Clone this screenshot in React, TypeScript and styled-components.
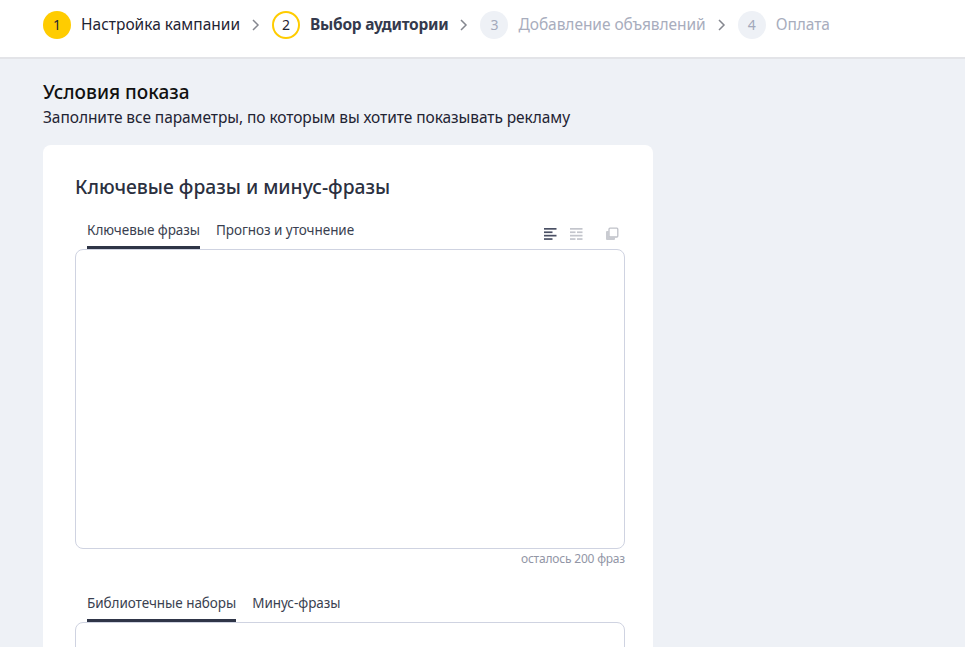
import React from "react";
import styled, { createGlobalStyle } from "styled-components";

const Global = createGlobalStyle`
  html, body { margin: 0; height: 100%; overflow: hidden; background: #eef1f6; }
  #root { height: 100%; }
  * { box-sizing: border-box; }
  body { font-family: "Noto Sans", "Open Sans", "Liberation Sans", sans-serif; color: #1f2433; }
`;

const Page = styled.div`
  height: 647px;
  overflow: hidden;
  display: flex;
  flex-direction: column;
`;

const Header = styled.header`
  flex: none;
  height: 59px;
  padding: 11px 0 0 43px;
  background: #fff;
  border-bottom: 2px solid #e3e4e8;
  display: flex;
  align-items: flex-start;
`;

const Step = styled.div`
  display: flex;
  align-items: center;
  height: 28px;
`;

const Badge = styled.span<{ $state: "done" | "active" | "todo" }>`
  width: 28px;
  height: 28px;
  border-radius: 50%;
  display: flex;
  align-items: center;
  justify-content: center;
  font-size: 14px;
  padding-bottom: 2px;
  background: ${(p) => (p.$state === "done" ? "#fc0" : p.$state === "todo" ? "#eef1f6" : "#fff")};
  border: ${(p) => (p.$state === "active" ? "2px solid #fc0" : "none")};
  color: ${(p) => (p.$state === "todo" ? "#a3a9bb" : "#1f2433")};
`;

const StepLabel = styled.span<{ $state: "done" | "active" | "todo" }>`
  margin-left: 10px;
  padding-bottom: 2px;
  font-size: 15.5px;
  letter-spacing: ${(p) => (p.$state === "active" ? "-0.25px" : p.$state === "todo" ? "-0.05px" : "0")};
  font-weight: ${(p) => (p.$state === "active" ? 700 : 400)};
  color: ${(p) => (p.$state === "todo" ? "#a8adbd" : p.$state === "active" ? "#343a4d" : "#1f2433")};
`;

const Chevron = styled.svg`
  width: 10px;
  height: 12px;
  margin: 0 11px 0 11px;
  fill: none;
  stroke: #85878f;
  stroke-width: 1.5;
`;

const Main = styled.main`
  padding: 21px 0 0 43px;
`;

const Title = styled.h1`
  margin: 0 0 1px;
  font-size: 19px;
  line-height: 24px;
  font-weight: 500;
  color: #111;
`;

const Subtitle = styled.p`
  margin: 0 0 16px;
  font-size: 15.5px;
  line-height: 24px;
  letter-spacing: -0.07px;
  color: #1f2433;
`;

const Card = styled.section`
  width: 610px;
  height: 560px;
  padding: 28px 28px 0 32px;
  background: #fff;
  border-radius: 8px 8px 0 0;
`;

const CardTitle = styled.h2`
  margin: 0 0 16px;
  font-size: 19.25px;
  line-height: 28px;
  font-weight: 500;
  color: #2b3040;
`;

const TabRow = styled.div`
  display: flex;
  align-items: flex-start;
  justify-content: space-between;
  height: 32px;
  padding: 0 0 0 12px;
`;

const Tabs = styled.div`
  display: flex;
  gap: 16px;
`;

const Tab = styled.div<{ $active?: boolean }>`
  height: 32px;
  line-height: 27px;
  font-size: 13.5px;
  letter-spacing: -0.05px;
  color: #3a3f50;
  border-bottom: 3px solid ${(p) => (p.$active ? "#2f3547" : "transparent")};
  margin-bottom: -1px;
`;

const Tools = styled.div`
  display: flex;
  align-items: center;
  height: 32px;
  padding: 1px 6px 0 0;
  gap: 12px;
`;

const ToolIcon = styled.svg<{ $gap?: boolean }>`
  width: 14px;
  height: 14px;
  display: block;
  margin-left: ${(p) => (p.$gap ? "10px" : "0")};
`;

const Field = styled.div<{ $height: number }>`
  position: relative;
  height: ${(p) => p.$height}px;
  border: 1px solid #cfd3e1;
  border-radius: 8px;
  background: #fff;
`;

const Counter = styled.div`
  text-align: right;
  font-size: 12px;
  line-height: 20px;
  letter-spacing: -0.2px;
  color: #9296a6;
  margin-bottom: 21px;
`;

const steps = [
  { n: 1, label: "Настройка кампании", state: "done" as const },
  { n: 2, label: "Выбор аудитории", state: "active" as const },
  { n: 3, label: "Добавление объявлений", state: "todo" as const },
  { n: 4, label: "Оплата", state: "todo" as const },
];

export default function App() {
  return (
    <Page>
      <Global />
      <Header>
        {steps.map((s, i) => (
          <React.Fragment key={s.n}>
            <Step>
              <Badge $state={s.state}>{s.n}</Badge>
              <StepLabel $state={s.state}>{s.label}</StepLabel>
            </Step>
            {i < steps.length - 1 && (
              <Step>
                <Chevron viewBox="0 0 10 12">
                  <path d="M2 1l5 5-5 5" />
                </Chevron>
              </Step>
            )}
          </React.Fragment>
        ))}
      </Header>
      <Main>
        <Title>Условия показа</Title>
        <Subtitle>Заполните все параметры, по которым вы хотите показывать рекламу</Subtitle>
        <Card>
          <CardTitle>Ключевые фразы и минус-фразы</CardTitle>
          <TabRow>
            <Tabs>
              <Tab $active>Ключевые фразы</Tab>
              <Tab>Прогноз и уточнение</Tab>
            </Tabs>
            <Tools>
              <ToolIcon viewBox="0 0 14 14" fill="#4a5064">
                <rect x="1" y="1" width="12.5" height="1.7" />
                <rect x="1" y="4.4" width="8.5" height="1.7" />
                <rect x="1" y="7.8" width="12.5" height="1.7" />
                <rect x="1" y="11.2" width="8.5" height="1.7" />
              </ToolIcon>
              <ToolIcon viewBox="0 0 14 14" fill="#c3c5cc">
                <rect x="1" y="1" width="12.5" height="1.7" />
                <rect x="1" y="4.4" width="5.5" height="1.7" />
                <rect x="8" y="4.4" width="5.5" height="1.7" />
                <rect x="1" y="7.8" width="12.5" height="1.7" />
                <rect x="1" y="11.2" width="5.5" height="1.7" />
                <rect x="8" y="11.2" width="5.5" height="1.7" />
              </ToolIcon>
              <ToolIcon $gap viewBox="0 0 14 14" fill="none" stroke="#bfc1c8" strokeWidth="1.3">
                <rect x="4" y="1.2" width="8.8" height="8.8" rx="1" />
                <path d="M4 4H2a1 1 0 0 0-1 1v7a1 1 0 0 0 1 1h7a1 1 0 0 0 1-1v-2H5a1 1 0 0 1-1-1z" fill="#c9cbd1" stroke="none" />
              </ToolIcon>
            </Tools>
          </TabRow>
          <Field $height={300} />
          <Counter>осталось 200 фраз</Counter>
          <TabRow>
            <Tabs>
              <Tab $active>Библиотечные наборы</Tab>
              <Tab>Минус-фразы</Tab>
            </Tabs>
          </TabRow>
          <Field $height={120} />
        </Card>
      </Main>
    </Page>
  );
}
